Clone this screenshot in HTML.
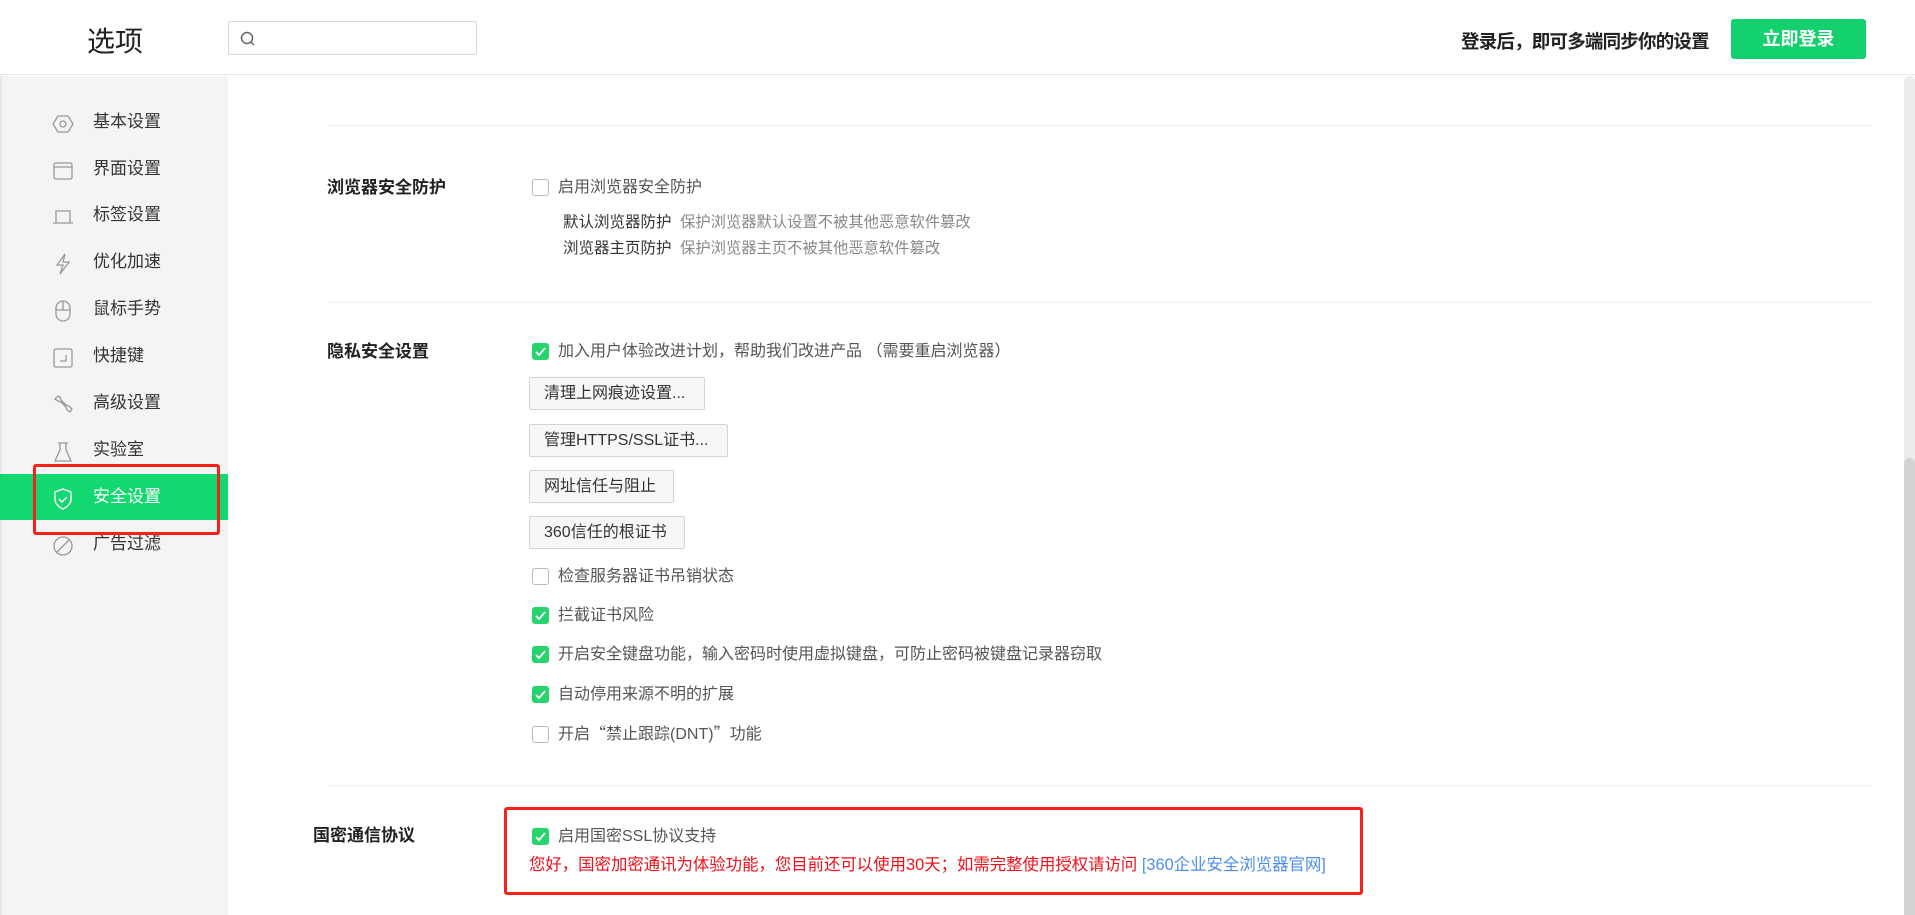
<!DOCTYPE html>
<html><head><meta charset="utf-8"><style>
*{margin:0;padding:0;box-sizing:border-box}
body{width:1915px;height:915px;overflow:hidden;background:#fff;font-family:"Liberation Sans","Noto Sans CJK SC",sans-serif;position:relative;color:#333}
.abs{position:absolute;white-space:nowrap}
.hdr{position:absolute;left:0;top:0;width:1915px;height:75px;border-bottom:1px solid #e8e8e8;background:#fff}
.side{position:absolute;left:0;top:76px;width:228px;height:839px;background:#f4f4f4;border-left:2px solid #e9e9e9}
.item{position:absolute;left:0;width:228px;height:46px;font-size:17px;color:#333;line-height:46px}
.item span{position:absolute;left:93px}
.item svg{position:absolute;left:52px;top:14px}
.lbl{font-size:17px;font-weight:bold;color:#222;line-height:20px}
.t{font-size:16px;color:#555;line-height:20px}
.cb{position:absolute;width:17px;height:17px;border:1px solid #bbb;border-radius:3px;background:#fff}
.cb.on{background:#25d46c;border-color:#25d46c}
.btn{position:absolute;left:529px;height:33px;border:1px solid #d4d4d4;border-radius:2px;background:#f7f7f7;font-size:16px;color:#333;line-height:31px;padding-left:14px}
.hr{position:absolute;left:327px;width:1545px;height:1px;background:#eeeeee}
.g{font-size:15.3px;color:#888}
.q{font-family:"Noto Sans CJK SC",sans-serif}
</style></head><body>
<div class="hdr"></div>
<div class="abs" style="left:87px;top:20px;font-size:28px;color:#222">选项</div>
<div class="abs" style="left:228px;top:21px;width:249px;height:34px;border:1px solid #d8d8d8;border-radius:2px"></div>
<svg class="abs" style="left:239px;top:30px" width="18" height="18" viewBox="0 0 18 18"><circle cx="8" cy="8" r="5.5" fill="none" stroke="#666" stroke-width="1.5"/><path d="M12 12l3 3" stroke="#666" stroke-width="1.5"/></svg>
<div class="abs" style="left:1461px;top:28px;font-size:18.5px;font-weight:bold;color:#222;letter-spacing:-0.8px">登录后，即可多端同步你的设置</div>
<div class="abs" style="left:1731px;top:19px;width:135px;height:40px;background:#13d06f;border-radius:3px;color:#fff;font-size:18px;font-weight:bold;text-align:center;line-height:40px">立即登录</div>

<div class="side"></div>
<div class="item" style="top:99px"><svg width="22" height="22" viewBox="0 0 22 22"><path d="M6 3h10l5 8-5 8H6L1 11z" fill="none" stroke="#999" stroke-width="1.3"/><circle cx="11" cy="11" r="3" fill="none" stroke="#999" stroke-width="1.3"/></svg><span>基本设置</span></div>
<div class="item" style="top:146px"><svg width="22" height="22" viewBox="0 0 22 22"><rect x="2" y="3" width="18" height="16" rx="1.5" fill="none" stroke="#999" stroke-width="1.3"/><path d="M2 7h18" stroke="#999" stroke-width="1.3"/></svg><span>界面设置</span></div>
<div class="item" style="top:192px"><svg width="22" height="22" viewBox="0 0 22 22"><path d="M4 17V5h14v12M1 17h20" fill="none" stroke="#999" stroke-width="1.3"/></svg><span>标签设置</span></div>
<div class="item" style="top:239px"><svg width="22" height="22" viewBox="0 0 22 22"><path d="M13 1L5 12h6l-3 9 9-12h-6z" fill="none" stroke="#999" stroke-width="1.3"/></svg><span>优化加速</span></div>
<div class="item" style="top:286px"><svg width="22" height="22" viewBox="0 0 22 22"><rect x="4" y="1" width="14" height="20" rx="7" fill="none" stroke="#999" stroke-width="1.3"/><path d="M4 10h14M11 1v9" stroke="#999" stroke-width="1.3"/></svg><span>鼠标手势</span></div>
<div class="item" style="top:333px"><svg width="22" height="22" viewBox="0 0 22 22"><rect x="2" y="2" width="18" height="18" rx="1.5" fill="none" stroke="#999" stroke-width="1.3"/><path d="M14 8v6H8" fill="none" stroke="#999" stroke-width="1.3"/></svg><span>快捷键</span></div>
<div class="item" style="top:380px"><svg width="22" height="22" viewBox="0 0 22 22"><path d="M3 5l3-3 2 1 1 3 5 5 3 1 3 3-2 3-3-2-1-3-5-5-3-1z" fill="none" stroke="#999" stroke-width="1.3"/></svg><span>高级设置</span></div>
<div class="item" style="top:427px"><svg width="22" height="22" viewBox="0 0 22 22"><path d="M6 2h10M8 2v7L3 20h16L14 9V2" fill="none" stroke="#999" stroke-width="1.3"/></svg><span>实验室</span></div>
<div class="abs" style="left:0;top:474px;width:228px;height:46px;background:#13d86f"></div>
<div class="item" style="top:474px;color:#fff"><svg width="22" height="22" viewBox="0 0 22 22"><path d="M11 1l8 3v7c0 5-4 8-8 10-4-2-8-5-8-10V4z" fill="none" stroke="#fff" stroke-width="1.4"/><path d="M7 11l3 3 5-5" fill="none" stroke="#fff" stroke-width="1.5"/></svg><span>安全设置</span></div>
<div class="item" style="top:521px"><svg width="22" height="22" viewBox="0 0 22 22"><circle cx="11" cy="11" r="9" fill="none" stroke="#999" stroke-width="1.3"/><path d="M5 17L17 5" stroke="#999" stroke-width="1.3"/></svg><span>广告过滤</span></div>
<div class="abs" style="left:33px;top:464px;width:187px;height:71px;border:3px solid #f5221b;border-radius:3px"></div>

<div class="hr" style="top:125px"></div>
<div class="abs lbl" style="left:327px;top:178px">浏览器安全防护</div>
<div class="cb" style="left:532px;top:179px"></div>
<div class="abs t" style="left:558px;top:178px">启用浏览器安全防护</div>
<div class="abs t" style="left:563px;top:213px;color:#333;font-size:15.5px">默认浏览器防护 <span class="g">&nbsp;保护浏览器默认设置不被其他恶意软件篡改</span></div>
<div class="abs t" style="left:563px;top:239px;color:#333;font-size:15.5px">浏览器主页防护 <span class="g">&nbsp;保护浏览器主页不被其他恶意软件篡改</span></div>

<div class="hr" style="top:302px"></div>
<div class="abs lbl" style="left:327px;top:342px">隐私安全设置</div>
<div class="cb on" style="left:532px;top:343px"><svg width="15" height="15" viewBox="0 0 15 15"><path d="M3 8l3 3 6-7" fill="none" stroke="#fff" stroke-width="1.8"/></svg></div>
<div class="abs t" style="left:558px;top:342px">加入用户体验改进计划，帮助我们改进产品 （需要重启浏览器）</div>
<div class="btn" style="top:377px;width:176px">清理上网痕迹设置...</div>
<div class="btn" style="top:424px;width:199px">管理HTTPS/SSL证书...</div>
<div class="btn" style="top:470px;width:145px">网址信任与阻止</div>
<div class="btn" style="top:516px;width:156px">360信任的根证书</div>
<div class="cb" style="left:532px;top:568px"></div>
<div class="abs t" style="left:558px;top:567px">检查服务器证书吊销状态</div>
<div class="cb on" style="left:532px;top:607px"><svg width="15" height="15" viewBox="0 0 15 15"><path d="M3 8l3 3 6-7" fill="none" stroke="#fff" stroke-width="1.8"/></svg></div>
<div class="abs t" style="left:558px;top:606px">拦截证书风险</div>
<div class="cb on" style="left:532px;top:646px"><svg width="15" height="15" viewBox="0 0 15 15"><path d="M3 8l3 3 6-7" fill="none" stroke="#fff" stroke-width="1.8"/></svg></div>
<div class="abs t" style="left:558px;top:645px">开启安全键盘功能，输入密码时使用虚拟键盘，可防止密码被键盘记录器窃取</div>
<div class="cb on" style="left:532px;top:686px"><svg width="15" height="15" viewBox="0 0 15 15"><path d="M3 8l3 3 6-7" fill="none" stroke="#fff" stroke-width="1.8"/></svg></div>
<div class="abs t" style="left:558px;top:685px">自动停用来源不明的扩展</div>
<div class="cb" style="left:532px;top:726px"></div>
<div class="abs t" style="left:558px;top:722px">开启<span class="q">“</span>禁止跟踪(DNT)<span class="q">”</span>功能</div>

<div class="hr" style="top:785px"></div>
<div class="abs lbl" style="left:313px;top:826px">国密通信协议</div>
<div class="cb on" style="left:532px;top:828px"><svg width="15" height="15" viewBox="0 0 15 15"><path d="M3 8l3 3 6-7" fill="none" stroke="#fff" stroke-width="1.8"/></svg></div>
<div class="abs t" style="left:558px;top:827px">启用国密SSL协议支持</div>
<div class="abs" style="left:529px;top:851px;font-size:16.4px;color:#f0101a">您好，国密加密通讯为体验功能，您目前还可以使用30天；如需完整使用授权请访问 <span style="color:#4c8ff0">[360企业安全浏览器官网]</span></div>
<div class="abs" style="left:504px;top:807px;width:859px;height:88px;border:3px solid #f5221b;border-radius:3px"></div>

<div class="abs" style="left:1904px;top:76px;width:11px;height:839px;background:#ededed;border-radius:5px 5px 0 0"></div>
<div class="abs" style="left:1904px;top:458px;width:11px;height:457px;background:#d3d3d3;border-radius:6px 6px 0 0"></div>
</body></html>
